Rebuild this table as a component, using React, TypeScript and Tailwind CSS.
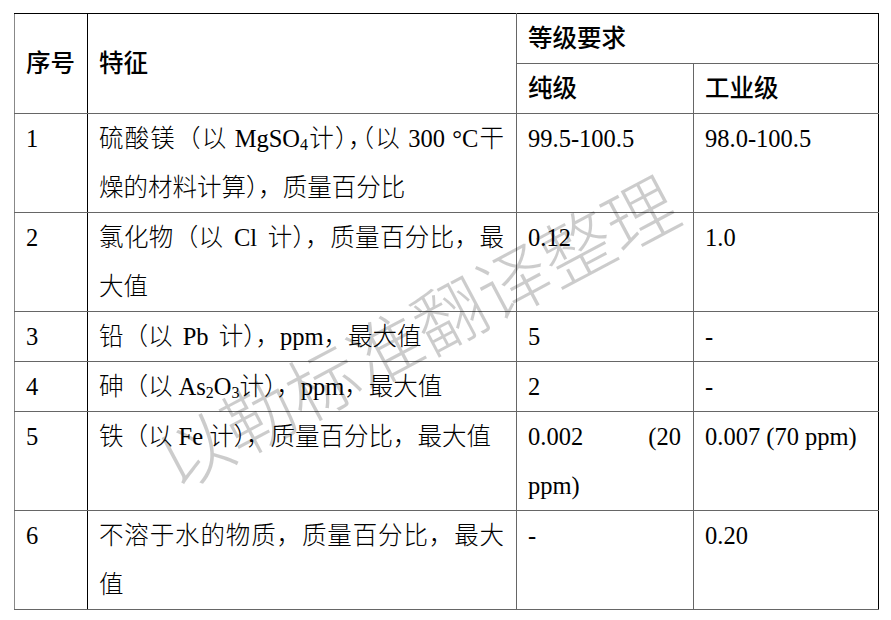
import React from 'react';

const serif = "font-['Liberation_Serif','Noto_Sans_CJK_SC',serif]";

// half-width punctuation, like Word's compression of "），（"
const Halt = ({ children }: { children: React.ReactNode }) => (
  <span className="[font-feature-settings:'halt']">{children}</span>
);

// latin word inside CJK text, with the extra gap Word adds around it
const Lat = ({ children }: { children: React.ReactNode }) => <span className="mx-[4px]">{children}</span>;

const Sub = ({ children }: { children: React.ReactNode }) => <sub className="text-[16px] -bottom-[3px]">{children}</sub>;

const Line = ({ children, full }: { children: React.ReactNode; full?: boolean }) => (
  <div className={full ? 'whitespace-nowrap [text-align-last:justify]' : 'whitespace-nowrap'}>{children}</div>
);

const td = 'border border-[#666] pl-[11px] pr-[12px] align-top';
const th = 'border border-[#666] pl-[11px] pr-[12px] align-middle text-left font-medium';

const rows: { no: string; name: React.ReactNode; pure: React.ReactNode; ind: string }[] = [
  {
    no: '1',
    name: (
      <>
        <Line full>
          硫酸镁（以 MgSO<Sub>4</Sub>计<Halt>），（</Halt>以 300 °C干
        </Line>
        <Line>
          燥的材料计算<Halt>）</Halt>，质量百分比
        </Line>
      </>
    ),
    pure: '99.5-100.5',
    ind: '98.0-100.5',
  },
  {
    no: '2',
    name: (
      <>
        <Line full>
          氯化物（以<Lat> Cl </Lat>计），质量百分比，最
        </Line>
        <Line>大值</Line>
      </>
    ),
    pure: '0.12',
    ind: '1.0',
  },
  {
    no: '3',
    name: (
      <Line>
        铅（以<Lat> Pb </Lat>计），ppm，最大值
      </Line>
    ),
    pure: '5',
    ind: '-',
  },
  {
    no: '4',
    name: (
      <Line>
        砷（以 As<Sub>2</Sub>O<Sub>3</Sub>计），ppm，最大值
      </Line>
    ),
    pure: '2',
    ind: '-',
  },
  {
    no: '5',
    name: <Line>铁（以 Fe 计），质量百分比，最大值</Line>,
    pure: (
      <>
        <div className="flex justify-between">
          <span>0.002</span>
          <span>(20</span>
        </div>
        <div>ppm)</div>
      </>
    ),
    ind: '0.007 (70 ppm)',
  },
  {
    no: '6',
    name: (
      <>
        <Line full>不溶于水的物质，质量百分比，最大</Line>
        <Line>值</Line>
      </>
    ),
    pure: '-',
    ind: '0.20',
  },
];

export default function App() {
  return (
    <div className={`relative w-[891px] h-[620px] bg-white overflow-hidden pt-[13px] pl-[14px] text-black font-light ${serif}`}>
      <table className="table-fixed border-collapse w-[864px] text-[24.5px] leading-[49px]">
        <colgroup>
          <col className="w-[73px]" />
          <col className="w-[429px]" />
          <col className="w-[177px]" />
          <col className="w-[185px]" />
        </colgroup>
        <thead>
          <tr>
            <th rowSpan={2} className={`${th} border-t-black border-l-[#888] border-r-black`}>
              序号
            </th>
            <th rowSpan={2} className={`${th} border-t-black`}>
              特征
            </th>
            <th colSpan={2} className={`${th} border-t-black border-r-black`}>
              等级要求
            </th>
          </tr>
          <tr>
            <th className={th}>纯级</th>
            <th className={`${th} border-r-black`}>工业级</th>
          </tr>
        </thead>
        <tbody>
          {rows.map((r) => (
            <tr key={r.no}>
              <td className={`${td} border-l-[#888] border-r-black`}>{r.no}</td>
              <td className={td}>{r.name}</td>
              <td className={td}>{r.pure}</td>
              <td className={`${td} border-r-black`}>{r.ind}</td>
            </tr>
          ))}
        </tbody>
      </table>

      {/* watermark */}
      <div className="pointer-events-none absolute left-[416px] top-[329px] -translate-x-1/2 -translate-y-1/2 -rotate-[28deg] whitespace-nowrap font-['Noto_Sans_CJK_SC',sans-serif] font-light text-[72px] leading-none text-black/20">
        以勒标准翻译整理
      </div>
    </div>
  );
}
